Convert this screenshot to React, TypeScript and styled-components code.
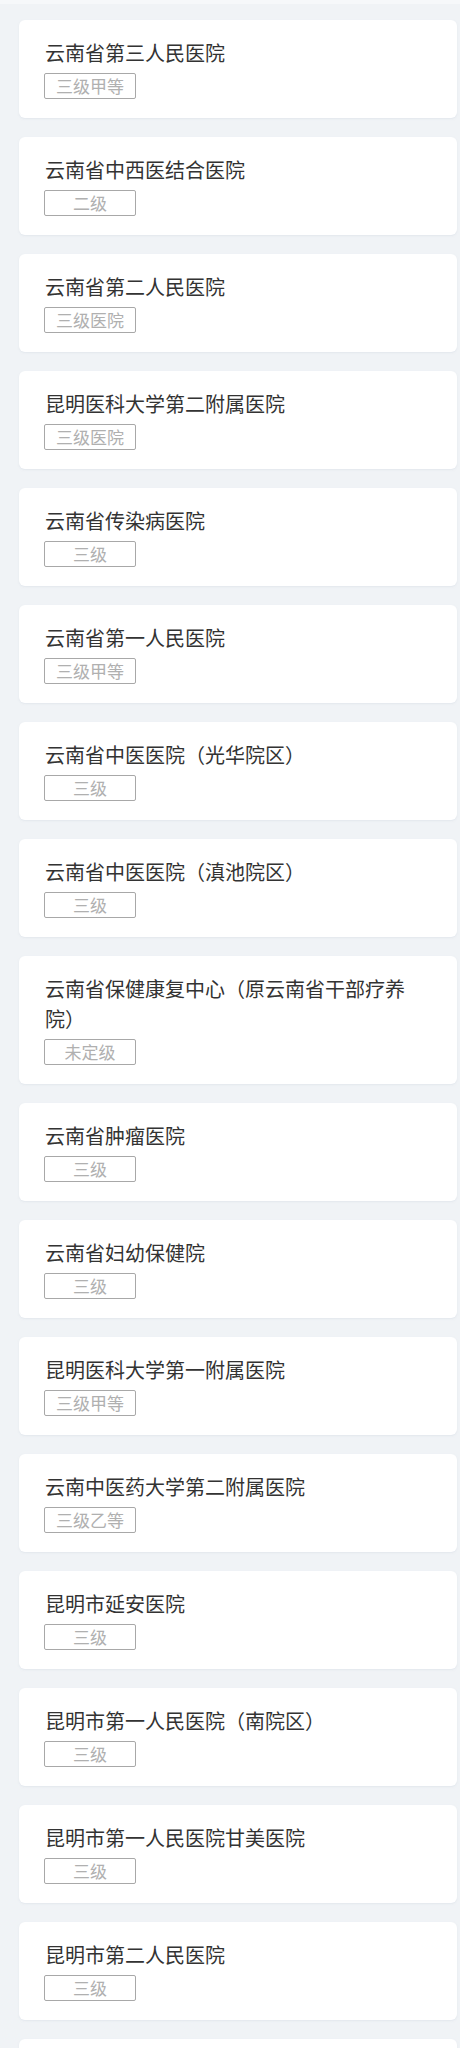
import React from "react";
import styled, { createGlobalStyle } from "styled-components";

const GlobalStyle = createGlobalStyle`
  html, body {
    margin: 0;
    padding: 0;
    background: #f0f3f6;
  }
  body {
    font-family: "Noto Sans CJK SC", "Noto Sans", sans-serif;
  }
`;

const Page = styled.div`
  display: flex;
  flex-direction: column;
  min-height: 2048px;
  background: #f0f3f6;
`;

const TopStrip = styled.div`
  height: 4px;
  background: #f6f8fa;
`;

const List = styled.div`
  display: flex;
  flex-direction: column;
  gap: 19px;
  padding: 16px 3px 20px 19px;
`;

const Card = styled.div`
  display: flex;
  flex-direction: column;
  align-items: flex-start;
  background: #ffffff;
  border-radius: 6px;
  padding: 18px 26px 19px 26px;
  box-shadow: 0 1px 2px rgba(200, 210, 220, 0.35);
`;

const Title = styled.div`
  font-size: 20px;
  line-height: 30px;
  color: #333333;
  font-weight: 400;
`;

const Tag = styled.div`
  box-sizing: border-box;
  width: 92px;
  height: 26px;
  margin-top: 5px;
  margin-left: -1px;
  border: 1px solid #a8a8a8;
  border-radius: 2px;
  display: flex;
  align-items: center;
  justify-content: center;
  font-size: 17px;
  line-height: 24px;
  color: #b0b0b0;
`;

const hospitals: { name: string; level: string }[] = [
  { name: "云南省第三人民医院", level: "三级甲等" },
  { name: "云南省中西医结合医院", level: "二级" },
  { name: "云南省第二人民医院", level: "三级医院" },
  { name: "昆明医科大学第二附属医院", level: "三级医院" },
  { name: "云南省传染病医院", level: "三级" },
  { name: "云南省第一人民医院", level: "三级甲等" },
  { name: "云南省中医医院（光华院区）", level: "三级" },
  { name: "云南省中医医院（滇池院区）", level: "三级" },
  { name: "云南省保健康复中心（原云南省干部疗养院）", level: "未定级" },
  { name: "云南省肿瘤医院", level: "三级" },
  { name: "云南省妇幼保健院", level: "三级" },
  { name: "昆明医科大学第一附属医院", level: "三级甲等" },
  { name: "云南中医药大学第二附属医院", level: "三级乙等" },
  { name: "昆明市延安医院", level: "三级" },
  { name: "昆明市第一人民医院（南院区）", level: "三级" },
  { name: "昆明市第一人民医院甘美医院", level: "三级" },
  { name: "昆明市第二人民医院", level: "三级" },
  { name: "昆明市第三人民医院", level: "三级" },
];

export default function App() {
  return (
    <>
      <GlobalStyle />
      <Page>
        <TopStrip />
        <List>
          {hospitals.map((h) => (
            <Card key={h.name}>
              <Title>{h.name}</Title>
              <Tag>{h.level}</Tag>
            </Card>
          ))}
        </List>
      </Page>
    </>
  );
}
